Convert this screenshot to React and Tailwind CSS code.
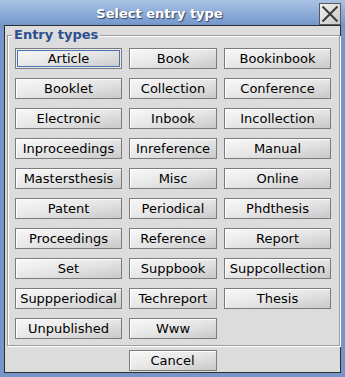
const TYPES = [
  'Article', 'Book', 'Bookinbook',
  'Booklet', 'Collection', 'Conference',
  'Electronic', 'Inbook', 'Incollection',
  'Inproceedings', 'Inreference', 'Manual',
  'Mastersthesis', 'Misc', 'Online',
  'Patent', 'Periodical', 'Phdthesis',
  'Proceedings', 'Reference', 'Report',
  'Set', 'Suppbook', 'Suppcollection',
  'Suppperiodical', 'Techreport', 'Thesis',
  'Unpublished', 'Www',
]

function Btn({ label, focus }) {
  return (
    <button
      className={`h-[21px] border border-[#7b7b7b] bg-gradient-to-br from-[#f8f8f8] via-[#e6e6e6] to-[#c9c9c9] text-[13px] leading-none text-black ${
        focus
          ? 'shadow-[inset_0_0_0_1px_#ececec,inset_0_0_0_2px_#4b70b3]'
          : 'shadow-[inset_1px_1px_0_#ffffff]'
      }`}
    >
      {label}
    </button>
  )
}

export default function App() {
  return (
    <div
      className="w-[345px] h-[377px] flex flex-col bg-[#7596cb] px-[4px] pb-[4px] select-none"
      style={{ fontFamily: '"DejaVu Sans", Verdana, sans-serif' }}
    >
      {/* Title bar */}
      <div className="-mx-[4px] h-[25px] flex bg-gradient-to-b from-[#a9c2e4] to-[#7497cc]">
        <div className="flex-1 flex items-center justify-center pt-[2px] text-[13px] font-bold text-white [text-shadow:1px_1px_1px_#2f4262]">
          Select entry type
        </div>
        <div className="mt-[3px] mr-[4px] w-[22px] h-[22px] border border-[#5a5a5a] bg-gradient-to-br from-[#f0f0f0] to-[#c8c8c8] flex items-center justify-center">
          <svg width="18" height="18" viewBox="0 0 18 18">
            <path d="M1.5 1.5 L16.5 16.5 M16.5 1.5 L1.5 16.5" stroke="#3a3a3a" strokeWidth="2" />
          </svg>
        </div>
      </div>

      {/* Body */}
      <div className="flex-1 flex flex-col border border-[#2d2d2d] bg-[#dcdcdc]">
        <fieldset className="mt-[2px] ml-[2px] mr-[1px] border border-[#9c9c9c] shadow-[1px_1px_0_#ffffff,inset_1px_1px_0_#ffffff] pl-[7px] pr-[8px] pt-[6px] pb-[6px]">
          <legend className="-ml-[3px] px-[2px] bg-[#dcdcdc] text-[13px] leading-[14px] font-bold text-[#2b4f8f]">
            Entry types
          </legend>
          <div className="grid grid-cols-[107px_88px_107px] gap-x-[7px] gap-y-[9px]">
            {TYPES.map((t, i) => (
              <Btn key={t} label={t} focus={i === 0} />
            ))}
          </div>
        </fieldset>
        <div className="mt-[4px] flex justify-center">
          <div className="w-[88px] flex flex-col">
            <Btn label="Cancel" />
          </div>
        </div>
      </div>
    </div>
  )
}
